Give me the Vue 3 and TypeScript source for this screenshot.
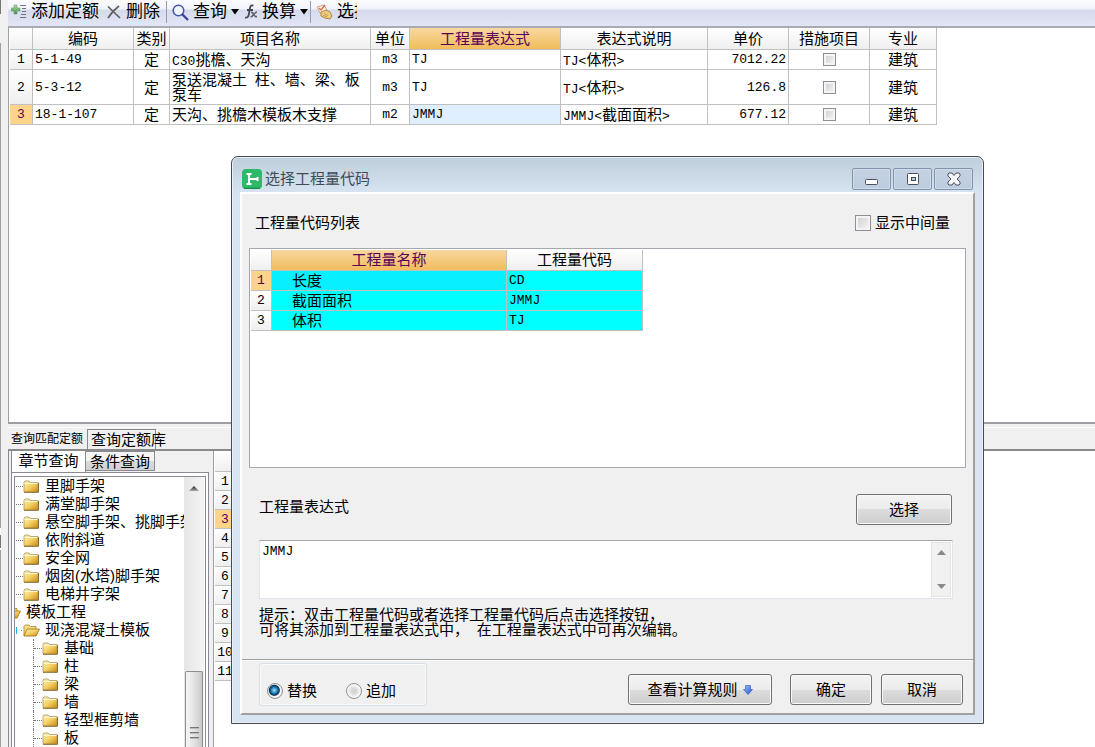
<script setup lang="ts">
import { ref } from 'vue'

interface Run { text: string; latin: boolean }
interface QuotaRow { code: string; kind: string; name: string[]; unit: string; expr: string; note: string; price: string; measure: boolean; major: string }
interface TreeItem { label: string; level: number; open?: boolean; current?: boolean }

const runs = (value: string): Run[] =>
  value.split(/([\x20-\x7e]+)/).filter(Boolean).map(text => ({ text, latin: /^[\x20-\x7e]/.test(text) }))

const columns = [
  { label: '编码', cls: 'c-code' },
  { label: '类别', cls: 'c-kind' },
  { label: '项目名称', cls: 'c-name' },
  { label: '单位', cls: 'c-unit' },
  { label: '工程量表达式', cls: 'c-expr active' },
  { label: '表达式说明', cls: 'c-note' },
  { label: '单价', cls: 'c-price' },
  { label: '措施项目', cls: 'c-measure' },
  { label: '专业', cls: 'c-major' },
]

const quotas = ref<QuotaRow[]>([
  { code: '5-1-49', kind: '定', name: ['C30挑檐、天沟'], unit: 'm3', expr: 'TJ', note: 'TJ<体积>', price: '7012.22', measure: false, major: '建筑' },
  { code: '5-3-12', kind: '定', name: ['泵送混凝土 柱、墙、梁、板', '泵车'], unit: 'm3', expr: 'TJ', note: 'TJ<体积>', price: '126.8', measure: false, major: '建筑' },
  { code: '18-1-107', kind: '定', name: ['天沟、挑檐木模板木支撑'], unit: 'm2', expr: 'JMMJ', note: 'JMMJ<截面面积>', price: '677.12', measure: false, major: '建筑' },
])
const selectedQuota = ref(2)

const tree: TreeItem[] = [
  { label: '里脚手架', level: 1 },
  { label: '满堂脚手架', level: 1 },
  { label: '悬空脚手架、挑脚手架', level: 1 },
  { label: '依附斜道', level: 1 },
  { label: '安全网', level: 1 },
  { label: '烟囱(水塔)脚手架', level: 1 },
  { label: '电梯井字架', level: 1 },
  { label: '模板工程', level: 0, open: true },
  { label: '现浇混凝土模板', level: 1, open: true, current: true },
  { label: '基础', level: 2 },
  { label: '柱', level: 2 },
  { label: '梁', level: 2 },
  { label: '墙', level: 2 },
  { label: '轻型框剪墙', level: 2 },
  { label: '板', level: 2 },
]

const codes = [
  { name: '长度', code: 'CD' },
  { name: '截面面积', code: 'JMMJ' },
  { name: '体积', code: 'TJ' },
]
const selectedCode = ref(0)
const showMiddle = ref(false)
const expression = ref('JMMJ')
const mode = ref('replace')
const hints = ['提示：双击工程量代码或者选择工程量代码后点击选择按钮，', '可将其添加到工程量表达式中， 在工程量表达式中可再次编辑。']
</script>

<template>
  <div class="app">
    <svg class="defs" aria-hidden="true">
      <defs>
        <linearGradient id="gold" x1="0" y1="0" x2="1" y2="1">
          <stop offset="0" stop-color="#fff3b8" /><stop offset=".5" stop-color="#f5cf62" /><stop offset="1" stop-color="#c98a10" />
        </linearGradient>
        <linearGradient id="plus" x1="0" y1="0" x2="0" y2="1">
          <stop offset="0" stop-color="#b5dba0" /><stop offset="1" stop-color="#3f8f4a" />
        </linearGradient>
        <linearGradient id="blue" x1="0" y1="0" x2="1" y2="1">
          <stop offset="0" stop-color="#9cc4ff" /><stop offset="1" stop-color="#1a4fd0" />
        </linearGradient>
        <linearGradient id="tick" x1="0" y1="0" x2="0" y2="1">
          <stop offset="0" stop-color="#222" /><stop offset="1" stop-color="#aaa" />
        </linearGradient>
      </defs>
    </svg>

    <div class="gutter"></div>
    <main class="workspace">
      <header class="toolbar">
        <button class="tool add">
          <svg width="16" height="16" viewBox="0 0 16 16"><path d="M3 1h3v3h3v3H6v3H3V7H0V4h3z" fill="url(#plus)" stroke="#6d9c6d" stroke-width=".6" /><path d="M9 1.500h6M11 4.500h4M11 7.500h4M10 10.500h5M9 13.500h6" stroke="#6d747d" stroke-width="1" /></svg>
          <span>添加定额</span>
        </button>
        <button class="tool remove">
          <svg width="14" height="14" viewBox="0 0 14 14"><path d="M1 1.500L13 13M12 1C8 4 4 8 1 13" fill="none" stroke="#606060" stroke-width="1.700" /></svg>
          <span>删除</span>
        </button>
        <i class="sep"></i>
        <button class="tool query">
          <svg width="17" height="17" viewBox="0 0 17 17"><circle cx="6.500" cy="6.500" r="5.300" fill="#eef5ff" stroke="#4858a8" stroke-width="1.500" /><path d="M10 10l6 6" stroke="#3b3d9b" stroke-width="2.200" /></svg>
          <span>查询</span>
          <svg width="8" height="6" viewBox="0 0 8 6"><path d="M0 0h8L4 5.500z" /></svg>
        </button>
        <button class="tool convert">
          <svg width="14" height="16" viewBox="0 0 14 16"><path d="M9.500 1.500C6 .5 6 4 5.400 7 4.800 11 4.500 14.500 1 13.500M3 6h6" fill="none" stroke="#3f4850" stroke-width="1.800" /><path d="M7 8.500c3-1 2 5 6 4M13 8c-3 0-3.500 5-6.500 5" fill="none" stroke="#59636c" stroke-width="1.600" /></svg>
          <span>换算</span>
          <svg width="8" height="6" viewBox="0 0 8 6"><path d="M0 0h8L4 5.500z" /></svg>
        </button>
        <i class="sep"></i>
        <button class="tool pick">
          <svg width="17" height="16" viewBox="0 0 17 16"><path d="M1 3l7-2 3 5-7 3z" fill="#fff4e8" stroke="#c9a38b" /><path d="M3 4l2 2 4-5" fill="none" stroke="#d9674c" stroke-width="1.300" /><path d="M5 8l5-2 4 2 2 4-2 3-5-1-4-2z" fill="#eccb82" stroke="#b48a3e" /><path d="M8 9l4 3M7 11l4 2" stroke="#b48a3e" stroke-width=".7" /></svg>
          <span class="cut">选择</span>
        </button>
      </header>

      <section class="quota">
        <table class="grid">
          <thead>
            <tr><th class="c-index"></th><th v-for="col in columns" :key="col.label" :class="col.cls">{{ col.label }}</th></tr>
          </thead>
          <tbody>
            <tr v-for="(row, i) in quotas" :key="row.code" :class="{ picked: i === selectedQuota }" @click="selectedQuota = i">
              <th class="mono">{{ i + 1 }}</th>
              <td class="mono">{{ row.code }}</td>
              <td class="mid">{{ row.kind }}</td>
              <td class="lines"><div v-for="line in row.name" :key="line" class="line"><span v-for="(r, k) in runs(line)" :key="k" :class="{ mono: r.latin }">{{ r.text }}</span></div></td>
              <td class="mid mono">{{ row.unit }}</td>
              <td class="mono expr">{{ row.expr }}</td>
              <td><span v-for="(r, k) in runs(row.note)" :key="k" :class="{ mono: r.latin }">{{ r.text }}</span></td>
              <td class="num mono">{{ row.price }}</td>
              <td class="mid"><input v-model="row.measure" type="checkbox" class="check" aria-label="措施项目" /></td>
              <td class="mid">{{ row.major }}</td>
            </tr>
          </tbody>
        </table>
      </section>

      <nav class="tabs">
        <button class="tab-match">查询匹配定额</button>
        <button class="tab-library">查询定额库</button>
      </nav>

      <section class="lower">
        <div class="chapter">
          <nav class="subtabs">
            <button class="on">章节查询</button>
            <button class="off">条件查询</button>
          </nav>
          <div class="chapter-body">
            <div class="treebox">
              <ul class="tree">
                <li v-for="item in tree" :key="item.label" :class="['level' + item.level, { current: item.current }]">
                  <i class="dots"></i>
                  <svg v-if="item.open" width="17" height="13" viewBox="0 0 17 13"><path d="M1 12V2.500L2.500 1H6l1.500 1.500H13V5" fill="#f8dc85" stroke="#a9822b" stroke-width=".8" /><path d="M1 12L4 5h12.500L13 12z" fill="url(#gold)" stroke="#a07012" stroke-width=".8" /></svg>
                  <svg v-else width="17" height="13" viewBox="0 0 17 13"><path d="M1 12V2l1-1h4l1.500 1.500H15V12z" fill="url(#gold)" stroke="#a99a66" stroke-width=".8" /><path d="M1.500 3.500h13" stroke="#fff8d0" stroke-width="1" /><path d="M1 12.300h14.500V3" fill="none" stroke="#80601c" stroke-width=".9" /></svg>
                  <span>{{ item.label }}</span>
                </li>
              </ul>
              <div class="treebar">
                <svg width="10" height="5" viewBox="0 0 10 5"><path d="M5 0l5 5H0z" fill="url(#tick)" /></svg>
                <div class="thumb"><i></i><i></i><i></i></div>
              </div>
            </div>
          </div>
        </div>
        <div class="results">
          <div class="result-head"></div>
          <div v-for="n in 11" :key="n" class="result-no mono" :class="{ now: n === 3 }">{{ n }}</div>
        </div>
      </section>
    </main>

    <section class="dialog" role="dialog" aria-labelledby="dialog-title">
      <header class="titlebar">
        <svg width="20" height="20" viewBox="0 0 20 20"><rect width="20" height="20" rx="4" fill="#2cba68" /><path d="M2 19.300h16" stroke="#168c48" stroke-width="1.300" /><path d="M4.500 5h5M4.500 15h5M7 4v12M7 10h9M15.500 8v4" fill="none" stroke="#fff" stroke-width="2" /></svg>
        <h1 id="dialog-title">选择工程量代码</h1>
        <div class="winbtns">
          <button aria-label="最小化"><svg width="14" height="14" viewBox="0 0 14 14"><rect x=".5" y="7.500" width="12" height="5" rx="1" fill="#fff" stroke="#4c4f5e" /></svg></button>
          <button aria-label="最大化"><svg width="14" height="14" viewBox="0 0 14 14"><rect x="1.500" y="1.500" width="11" height="11" rx="1" fill="#fff" stroke="#4c4f5e" /><rect x="5.500" y="5.500" width="4" height="3" fill="#b9cbdc" stroke="#454858" /></svg></button>
          <button aria-label="关闭"><svg width="14" height="14" viewBox="0 0 14 14"><path d="M1 2l1-1h3l2 2.500L9 1h3l1 1v2l-3 3 3 3v2l-1 1H9l-2-2.500L5 13H2l-1-1v-2l3-3-3-3z" fill="#f6f6f6" stroke="#4c4f5e" /></svg></button>
        </div>
      </header>

      <div class="client">
        <div class="list-head">
          <span>工程量代码列表</span>
          <label><input v-model="showMiddle" type="checkbox" class="check big" />显示中间量</label>
        </div>
        <div class="codebox">
          <table class="grid codes">
            <thead><tr><th class="k-index"></th><th class="k-name active">工程量名称</th><th class="k-code">工程量代码</th></tr></thead>
            <tbody>
              <tr v-for="(c, i) in codes" :key="c.code" :class="{ picked: i === selectedCode }" @click="selectedCode = i">
                <th class="mono">{{ i + 1 }}</th><td class="label">{{ c.name }}</td><td class="mono">{{ c.code }}</td>
              </tr>
            </tbody>
          </table>
        </div>
        <div class="expr-head">
          <label for="expression">工程量表达式</label>
          <button class="btn choose">选择</button>
        </div>
        <div class="exprbox">
          <textarea id="expression" v-model="expression" class="mono"></textarea>
          <div class="exprbar">
            <svg width="9" height="5" viewBox="0 0 9 5"><path d="M4.500 0L9 5H0z" fill="#888" /></svg>
            <svg width="9" height="5" viewBox="0 0 9 5"><path d="M0 0h9L4.500 5z" fill="#888" /></svg>
          </div>
        </div>
        <div class="hint">
          <div v-for="line in hints" :key="line" class="line"><span v-for="(r, k) in runs(line)" :key="k" :class="{ mono: r.latin }">{{ r.text }}</span></div>
        </div>
        <footer class="foot">
          <div class="modes">
            <label><input v-model="mode" type="radio" value="replace" />替换</label>
            <label><input v-model="mode" type="radio" value="append" />追加</label>
          </div>
          <button class="btn rules">查看计算规则<svg width="10" height="10" viewBox="0 0 10 10"><path d="M2.500 .5h5v4h2L5 9.500.5 4.500h2z" fill="url(#blue)" stroke="#2850b8" stroke-width=".6" /></svg></button>
          <button class="btn ok">确定</button>
          <button class="btn">取消</button>
        </footer>
      </div>
    </section>
  </div>
</template>

<style>
body { overflow: hidden; }
</style>

<style scoped>
* { box-sizing: border-box; }
.app {
  position: relative;
  display: flex;
  height: 100vh;
  overflow: hidden;
  background: #f0f0f0;
  color: #000;
  font: 15px/18px "Liberation Sans", "Noto Sans CJK SC", sans-serif;
}
.defs { position: absolute; width: 0; height: 0; }
button, input, textarea { font: inherit; color: inherit; margin: 0; }
button { padding: 0; border: 0; background: none; white-space: nowrap; }
.mono { font-family: "Liberation Mono", "Noto Sans CJK SC", monospace; font-size: 13px; }
span.mono { line-height: 1; }

.gutter {
  flex: 0 0 8px;
  background: linear-gradient(#777 0 14px, #f0f0f0 14px 43px, #a0a0a0 43px 528px, #fff 528px 535px, #777 535px 548px, #fff 548px 550px, #a0a0a0 550px) 0 0 / 1px 100% no-repeat #f0f0f0;
}
.workspace { flex: 1; min-width: 0; display: flex; flex-direction: column; }

.toolbar {
  flex: 0 0 28px;
  display: flex;
  align-items: center;
  padding: 0 0 2px 3px;
  background: linear-gradient(#fbfcfe 0, #f0f3fa 9px, #d5daed 10px, #e2e6f6 26px);
  border-bottom: 2px solid #a9abb4;
}
.tool { display: flex; align-items: center; font-size: 17px; line-height: 22px; }
.tool svg { flex: none; }
.add { gap: 4px; }
.remove { gap: 5px; margin-left: 8px; }
.sep { width: 1px; height: 22px; margin: 0 5px 0 6px; background: #9a9da8; }
.query { gap: 4px; }
.convert { gap: 4px; margin-left: 5px; }
.convert + .sep { margin: 0 5px 0 2px; }
.pick { gap: 4px; }
.cut { width: 20px; overflow: hidden; }

.quota { flex: 4 1 0; background: #fff; border-left: 1px solid #a0a0a0; border-bottom: 2px solid #9d9da3; padding-left: 1px; }
.grid { table-layout: fixed; border-collapse: separate; border-spacing: 0; width: 927px; }
.grid th, .grid td { height: 20px; padding: 0 2px; border-right: 1px solid #c0c0c0; border-bottom: 1px solid #c0c0c0; font-weight: normal; line-height: 17px; white-space: nowrap; overflow: hidden; text-align: left; }
.grid th { padding: 0; text-align: center; background: linear-gradient(#fff, #efefef); }
.grid thead th { height: 22px; }
.grid thead .active { color: #5a0058; background: linear-gradient(#f9d7a0, #f0bd5c); }
.grid .picked th { color: #5a0058; background: #ffd48a; }
.grid .lines { padding: 2px; }
.grid .mid { text-align: center; }
.grid .num { text-align: right; }
.picked .expr { background: #e0efff; }
.c-index { width: 23px; }
.c-code { width: 101px; }
.c-kind { width: 36px; }
.c-name { width: 201px; }
.c-unit { width: 39px; }
.c-expr { width: 151px; }
.c-note { width: 147px; }
.c-price, .c-measure { width: 81px; }
.c-major { width: 67px; }
.line { height: 15px; line-height: 15px; white-space: pre; }

.check { appearance: none; display: block; width: 13px; height: 13px; margin: 0 auto; border: 1px solid #8e8f8f; background: linear-gradient(135deg, #c9cdd3, #f6f6f6); box-shadow: inset 0 0 0 2px #f4f4f4; }
.check:checked { background: #4a78b8; }
.big { width: 16px; height: 16px; margin: 0; }

.tabs { flex: 0 0 27px; display: flex; align-items: flex-end; padding-left: 3px; border-bottom: 2px solid #8a8a8a; box-shadow: inset 0 4px 0 -1px #f0f0f0, inset 0 5px 0 -1px #fff; }
.tab-match { width: 76px; height: 20px; font-size: 12px; line-height: 14px; text-align: left; }
.tab-library { width: 69px; height: 20px; padding-left: 3px; border: 1px solid #8a8a8a; border-bottom: 0; line-height: 19px; text-align: left; }

.lower { flex: 3 1 0; min-height: 0; display: flex; }
.chapter { flex: 0 0 201px; min-width: 0; display: flex; flex-direction: column; border-left: 1px solid #8a8a94; }
.subtabs { display: flex; align-items: flex-start; flex: 0 0 21px; padding-left: 2px; }
.subtabs button { line-height: 17px; }
.subtabs .on { width: 75px; height: 21px; padding-bottom: 2px; background: #fff; border-left: 1px solid #8a8a94; border-right: 1px solid #8a8a94; }
.subtabs .off { width: 69px; height: 20px; border: 1px solid #8a8a94; border-left: 0; background: linear-gradient(#f4f4f4 50%, #dcdcdc 50%, #d0d0d0); }
.chapter-body { flex: 1; min-height: 0; margin-left: 2px; padding: 3px 2px 0 2px; background: #fff; border: solid #8a8a94; border-width: 1px 1px 0 1px; }
.treebox { display: flex; height: 100%; overflow: hidden; border: 1px solid #8a8a94; border-bottom: 0; }
.tree { flex: 1; min-width: 0; margin: 0; padding: 0 0 0 1px; list-style: none; overflow: hidden; }
.tree li { display: flex; align-items: center; height: 18px; white-space: nowrap; }
.tree svg { flex: none; margin-right: 5px; }
.dots { flex: none; width: 7px; border-top: 1px dotted #777; }
.current .dots { height: 7px; border-top: 0; border-left: 1px solid #18b4f0; background: linear-gradient(90deg, #fff 4px, #777 4px 5px, #fff 5px) 0 3px / 100% 1px no-repeat; }
.level2 { margin-left: 17px; border-left: 1px dotted #777; }
.level2 .dots { width: 8px; }
.tree .level0 { margin-left: -12px; }
.level0 .dots { width: 0; }
.treebar { flex: 0 0 20px; margin-right: 1px; display: flex; flex-direction: column; align-items: center; justify-content: space-between; padding-top: 9px; background: linear-gradient(90deg, #e6e6e6, #f4f4f4); }
.thumb { width: 18px; height: 29%; display: flex; flex-direction: column; align-items: center; gap: 3px; padding-top: 55px; border: 1px solid #8e8e8e; border-bottom: 0; border-radius: 2px 2px 0 0; background: linear-gradient(90deg, #f6f6f6, #e3e3e3 50%, #c9c9c9); }
.thumb i { width: 9px; height: 2px; background: linear-gradient(#555, #ddd); }
.results { flex: 1; margin-left: 4px; padding-left: 1px; background: #fff; border-left: 1px solid #a0a0a0; }
.result-head, .result-no { width: 20px; height: 19px; border-bottom: 1px solid #c0c0c0; background: linear-gradient(#fff, #efefef); text-align: center; line-height: 20px; }
.result-head { height: 21px; }
.result-no.now { color: #5a0058; background: #ffd48a; }

.dialog {
  position: absolute;
  left: 231px;
  right: 111px;
  top: 156px;
  padding: 0 8px 8px;
  border: 1px solid #484a50;
  border-radius: 7px 7px 0 0;
  background: linear-gradient(#bfcedb, #d8e4f1 38px);
  box-shadow: inset 0 0 0 1px #e8f0f8;
}
.titlebar { display: flex; align-items: center; height: 35px; padding: 8px 0 0 2px; }
.titlebar h1 { margin: 0 0 0 3px; font-size: 15px; font-weight: normal; line-height: 20px; color: #414b55; }
.winbtns { display: flex; gap: 2px; margin: 0 2px 0 auto; }
.winbtns button { display: grid; place-items: center; width: 39px; height: 22px; border: 1px solid #8393af; border-radius: 2px; background: linear-gradient(#c5d2e2, #bccbdf); box-shadow: inset 0 0 0 1px #cfdbe8; }
.client { display: flex; flex-direction: column; border: 2px solid; border-color: #fff #a0a0a0 #a0a0a0 #fff; background: #f0f0f0; }
.list-head { display: flex; justify-content: space-between; padding: 19px 23px 0 13px; line-height: 20px; }
.list-head label { display: flex; align-items: center; gap: 4px; }
.codebox { height: 220px; margin: 15px 7px 0; padding: 1px; border: 1px solid #a5a7ae; background: #fff; }
.codes { width: 392px; }
.grid.codes thead th { height: 21px; line-height: 18px; }
.k-index { width: 21px; }
.k-name { width: 235px; }
.k-code { width: 136px; }
.codes td { background: #0ff; }
.grid .label { padding-left: 20px; }
.codes .picked .label { background: #08f0ff; }
.expr-head { display: flex; justify-content: space-between; align-items: center; margin: 26px 21px 0 17px; }
.expr-head label { padding-bottom: 6px; }
.btn { height: 31px; width: 82px; border: 1px solid #707070; border-radius: 3px; background: linear-gradient(#f4f4f4, #ebebeb 50%, #dcdcdc 50%, #cecece); box-shadow: inset 0 0 0 1px #fafafa; }
.choose { width: 96px; }
.exprbox { display: flex; height: 59px; margin: 15px 20px 0 17px; border: 1px solid #dfe4ea; border-top-color: #a5a7ae; background: #fff; }
textarea { flex: 1; min-width: 0; padding: 2px; border: 0; outline: 0; resize: none; background: #fff; line-height: 17px; }
.exprbar { width: 20px; margin: 1px; display: flex; flex-direction: column; align-items: center; justify-content: space-between; padding: 7px 0; border: 1px solid #e4e4e4; background: #f1f1f1; }
.hint { margin: 8px 18px 22px 17px; }
.foot { display: flex; align-items: flex-start; height: 54px; padding: 3px 10px 0 17px; border-top: 1px solid #a0a0a0; box-shadow: inset 0 1px 0 #fff; }
.modes { display: flex; align-items: center; gap: 29px; width: 168px; height: 43px; margin-right: auto; padding: 12px 0 0 7px; border: 1px solid #d5dfe5; border-radius: 3px; box-shadow: inset 0 0 0 1px #fafafa; }
.modes label { display: flex; align-items: center; gap: 4px; }
.modes input { appearance: none; width: 16px; height: 16px; border: 1px solid #8e8f8f; border-radius: 50%; background: radial-gradient(circle, #d5d5d5 0 2px, #eee 5px, #fff 7px); }
.modes input:checked { background: radial-gradient(circle at 45% 45%, #a8e0ff 0, #1c84bd 3px, #0c2c50 5px, #f4f4f4 6px); }
.foot .btn { margin: 11px 0 0 9px; }
.foot .rules { display: flex; align-items: center; justify-content: center; gap: 5px; width: 144px; }
.foot .ok { margin-left: 18px; }
</style>
